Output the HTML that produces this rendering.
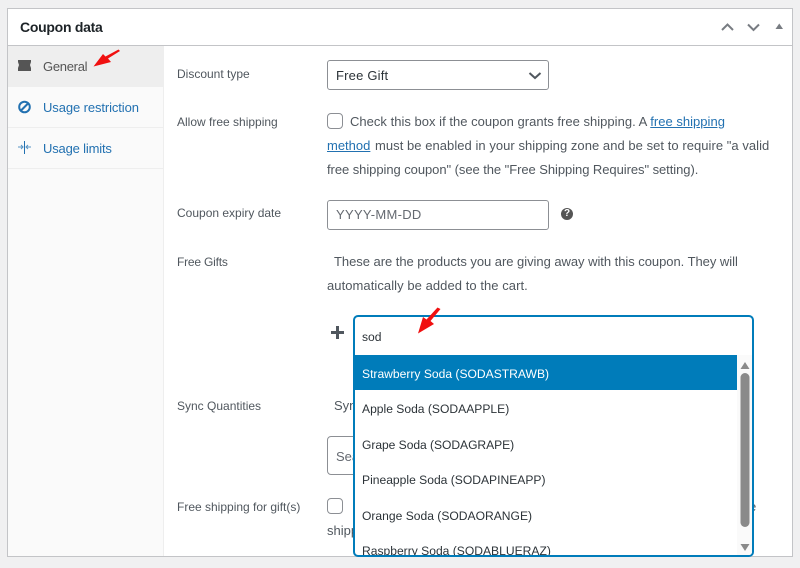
<!DOCTYPE html>
<html><head><meta charset="utf-8"><style>
html,body{margin:0;padding:0}
body{width:800px;height:568px;background:#f0f0f1;position:relative;overflow:hidden;font-family:"Liberation Sans",sans-serif;font-size:13px;color:#50575e}
div,span,a{position:absolute;white-space:nowrap;box-sizing:border-box}
.t{line-height:18px}
.l{left:177px;font-size:12px}
a{color:#2271b1;text-decoration:none}
a.u{text-decoration:underline;color:#2271b1}
.cb{width:16px;height:16px;border:1px solid #8c8f94;border-radius:4px;background:#fff;left:327px}
.o{left:362px;color:#2c3338;font-size:12.1px;letter-spacing:0}
</style></head><body>
<div style="left:7px;top:8px;width:786px;height:549px;background:#fff;border:1px solid #c3c4c7;overflow:hidden"></div>
<div style="left:8px;top:45px;width:784px;height:1px;background:#c3c4c7"></div>
<div style="left:8px;top:46px;width:156px;height:510px;background:#fafafa;border-right:1px solid #eee"></div>
<div style="left:8px;top:46px;width:156px;height:41px;background:#eee"></div>
<div style="left:8px;top:127px;width:156px;height:1px;background:#eee"></div>
<div style="left:8px;top:168px;width:156px;height:1px;background:#eee"></div>
<div class="t" style="left:20px;top:18px;font-size:14px;font-weight:bold;color:#1d2327;letter-spacing:-.27px">Coupon data</div>
<svg style="position:absolute;left:718px;top:20px" width="76" height="14" viewBox="0 0 76 14"><path d="M4 10L9.500 4.500L15 10" fill="none" stroke="#787c82" stroke-width="2"/><path d="M30 4.500L35.500 10L41 4.500" fill="none" stroke="#787c82" stroke-width="2"/><path d="M57.500 9H65L61.250 3.500Z" fill="#787c82"/></svg>
<svg style="position:absolute;left:17px;top:59px" width="16" height="14" viewBox="0 0 16 14"><path d="M1 1H14V3L13 6L14 9V12H1V9L2 6L1 3Z" fill="#555"/></svg>
<span class="t" style="left:43px;top:58px;color:#555;letter-spacing:-.28px">General</span>
<svg style="position:absolute;left:92px;top:48px" width="30" height="22" viewBox="0 0 30 22"><path d="M28 3L16 10.500L19 14L1.500 18.500L11 6L13.500 8.500L26.500 1.500Z" fill="#f01010"/></svg>
<svg style="position:absolute;left:17px;top:100px" width="15" height="15" viewBox="0 0 15 15"><circle cx="7.500" cy="7" r="5.300" fill="none" stroke="#2271b1" stroke-width="2"/><path d="M3.500 11L11.500 3" stroke="#2271b1" stroke-width="2"/></svg>
<a class="t" style="left:43px;top:99px;letter-spacing:-.1px">Usage restriction</a>
<svg style="position:absolute;left:17px;top:140px" width="15" height="15" viewBox="0 0 15 15"><path d="M7.500 1V14" stroke="#2271b1" stroke-width="1" fill="none"/><path d="M1 7H5.500M9.500 7H14M4 5L6 7L4 9M11 5L9 7L11 9" stroke="#2271b1" stroke-width="1" fill="none" opacity=".75"/></svg>
<a class="t" style="left:43px;top:140px;letter-spacing:-.17px">Usage limits</a>

<span class="t l" style="top:65px">Discount type</span>
<span class="t l" style="top:113px">Allow free shipping</span>
<span class="t l" style="top:204px">Coupon expiry date</span>
<span class="t l" style="top:253px;letter-spacing:-.2px">Free Gifts</span>
<span class="t l" style="top:397px">Sync Quantities</span>
<span class="t l" style="top:498px">Free shipping for gift(s)</span>

<div style="left:327px;top:60px;width:222px;height:30px;border:1px solid #8c8f94;border-radius:3px;background:#fff"></div>
<span class="t" style="left:336px;top:67px;color:#2c3338;letter-spacing:.2px">Free Gift</span>
<svg style="position:absolute;left:527px;top:71px" width="16" height="10" viewBox="0 0 16 10"><path d="M2.500 2L8 7L13.500 2" fill="none" stroke="#50575e" stroke-width="2"/></svg>

<div class="cb" style="top:113px"></div>
<span class="t" style="left:350px;top:113px;letter-spacing:.02px">Check this box if the coupon grants free shipping. A <a class="u" style="position:static">free shipping</a></span>
<a class="u t" style="left:327px;top:137px">method</a>
<span class="t" style="left:375px;top:137px;letter-spacing:.045px">must be enabled in your shipping zone and be set to require "a valid</span>
<span class="t" style="left:327px;top:161px;letter-spacing:-.06px">free shipping coupon" (see the "Free Shipping Requires" setting).</span>

<div style="left:327px;top:200px;width:222px;height:30px;border:1px solid #8c8f94;border-radius:3px;background:#fff"></div>
<span class="t" style="left:336px;top:206px;color:#646970;letter-spacing:.3px">YYYY-MM-DD</span>
<div style="left:561px;top:208px;width:12px;height:12px;border-radius:50%;background:#555;color:#fff;font-size:10px;font-weight:bold;line-height:12px;text-align:center">?</div>

<span class="t" style="left:334px;top:253px;letter-spacing:-.04px">These are the products you are giving away with this coupon. They will</span>
<span class="t" style="left:327px;top:277px;letter-spacing:.06px">automatically be added to the cart.</span>

<svg style="position:absolute;left:330px;top:325px" width="15" height="15" viewBox="0 0 15 15"><path d="M7.500 1V14M1 7.500H14" stroke="#50575e" stroke-width="3"/></svg>

<span class="t" style="left:334px;top:397px">Sync</span>
<div style="left:327px;top:436px;width:60px;height:39px;border:1px solid #8c8f94;border-radius:4px;background:#fff"></div>
<span class="t" style="left:336px;top:448px;color:#646970">Sea</span>
<div class="cb" style="top:498px"></div>
<span class="t" style="left:327px;top:522px">shipping</span>
<span class="t" style="left:749px;top:498px">e</span>

<div style="left:353px;top:315px;width:401px;height:242px;border:2px solid #007cba;border-radius:5px;background:#fff;overflow:hidden">
  <div style="left:0;top:38px;width:382px;height:35px;background:#007cba"></div>
  <div style="left:382px;top:38px;width:15px;height:200px;background:#fafafa"></div>
  <svg style="position:absolute;left:383px;top:38px" width="14" height="200" viewBox="0 0 14 200"><path d="M2.500 14L7 7L11.500 14Z" fill="#8a8a8a"/><rect x="2.500" y="18" width="9" height="154" rx="4.500" fill="#8a8a8a"/><path d="M2.500 189H11.500L7 196Z" fill="#8a8a8a"/></svg>
</div>
<span class="t o" style="top:328px;color:#2c3338">sod</span>
<svg style="position:absolute;left:416px;top:306px" width="28" height="28" viewBox="0 0 28 28"><path d="M24.500 3L14.500 15L18 18L2 27.500L7 11L10.500 13.500L21.500 1.500Z" fill="#f01010"/></svg>
<span class="t o" style="top:365px;color:#fff">Strawberry Soda (SODASTRAWB)</span>
<span class="t o" style="top:400px">Apple Soda (SODAAPPLE)</span>
<span class="t o" style="top:436px;letter-spacing:-.05px">Grape Soda (SODAGRAPE)</span>
<span class="t o" style="top:471px">Pineapple Soda (SODAPINEAPP)</span>
<span class="t o" style="top:507px">Orange Soda (SODAORANGE)</span>
<div style="left:355px;top:535px;width:380px;height:20px;overflow:hidden"><span class="t o" style="left:7px;top:7px">Raspberry Soda (SODABLUERAZ)</span></div>
</body></html>
